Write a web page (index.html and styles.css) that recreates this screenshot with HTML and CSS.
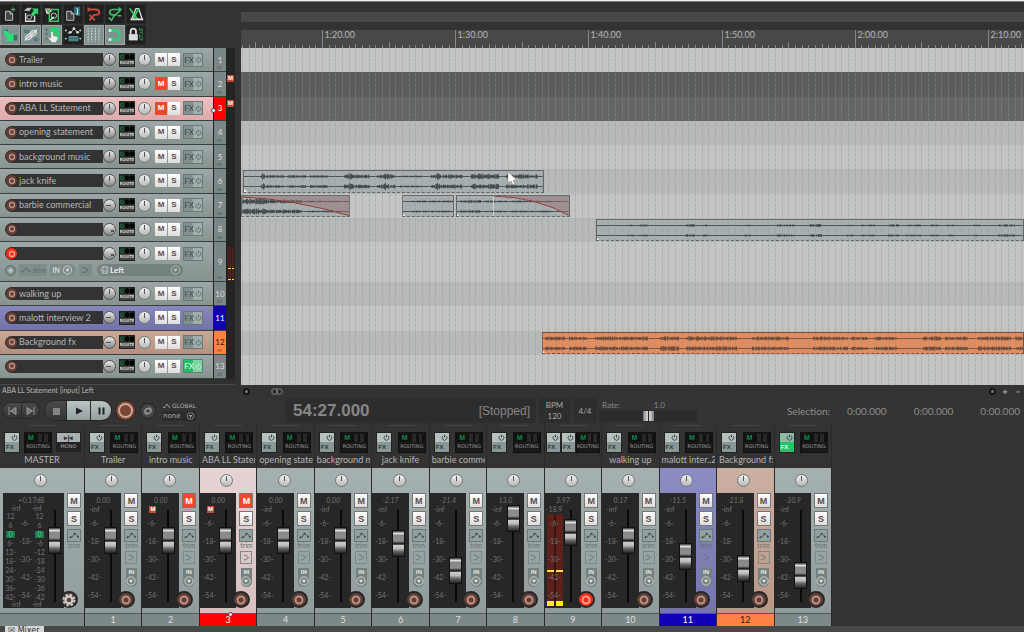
FILE: index.html
```html
<!DOCTYPE html>
<html lang="en">
<head>
<meta charset="utf-8">
<title>Mixer session</title>
<link rel="stylesheet" href="styles.css">
</head>
<body>
<svg class="defs" aria-hidden="true">
  <symbol id="i-new" viewBox="0 0 20 20"><path d="M5 7h5l3 3v7H5z" fill="#444" stroke="#ccc"/><path d="M10 7v3h3" fill="none" stroke="#ccc"/><path d="M13.500 2.500v5M11 5h5M12 3.500l3 3M15 3.500l-3 3" stroke="#4c9f68"/></symbol>
  <symbol id="i-open" viewBox="0 0 20 20"><path d="M4 9v9h10v-6" fill="none" stroke="#ddd" stroke-width="1.500"/><circle cx="8" cy="13.500" r="2.500" fill="none" stroke="#ddd"/><path d="M2 6l4-3 5 0-3 4z" fill="#bbb"/><path d="M10 10l3-4-2-2h7v7l-2-2-4 4z" fill="#39d16d"/></symbol>
  <symbol id="i-save" viewBox="0 0 20 20"><path d="M2 4h6l2 3-3 3H4z" fill="#ccc"/><path d="M4 5l5 4" stroke="#333"/><path d="M7 9V5h10v13H7z" fill="none" stroke="#39c969" stroke-width="1.500"/><circle cx="12" cy="12" r="3" fill="none" stroke="#ddd"/><path d="M8 17l4-4" stroke="#ddd" stroke-width="1.500"/></symbol>
  <symbol id="i-info" viewBox="0 0 20 20"><path d="M3 7h5l3 3v7H3z" fill="#444" stroke="#ccc"/><path d="M8 7v3h3" fill="none" stroke="#ccc"/><path d="M11 2h7v10h-4l-3-3z" fill="#327078"/><path d="M14 4h1v6M13 10h3" fill="none" stroke="#cfe" stroke-width="1"/></symbol>
  <symbol id="i-undo" viewBox="0 0 20 20"><path d="M3 5h9q4 0 4 3t-4 3h-2l-5 6M5 11l6 6" fill="none" stroke="#c94b3b" stroke-width="2"/><path d="M3 2v6l3-3z" fill="#c94b3b"/></symbol>
  <symbol id="i-redo" viewBox="0 0 20 20"><path d="M16 5H8Q4 5 4 8t4 3h4M16 6L9 12l-3 5-3-3M13 12h4" fill="none" stroke="#42b86d" stroke-width="1.800"/><path d="M14 2v6l4-3z" fill="#42b86d"/></symbol>
  <symbol id="i-metro" viewBox="0 0 20 20"><path d="M10 4h3l4 12H5z" fill="none" stroke="#ddd" stroke-width="1.500"/><path d="M3 4l9 12M7 15l6-11" stroke="#35d36d" stroke-width="1.800"/><path d="M4 16h14" stroke="#ddd" stroke-width="2"/></symbol>
  <symbol id="i-cross" viewBox="0 0 20 20"><path d="M3 4h5v5H3zM12 10h6v6h-6z" fill="#456b68"/><path d="M3 5l3 0 5 5 3-3v10H5l3-3-4-4z" fill="#22e477"/></symbol>
  <symbol id="i-link" viewBox="0 0 20 20"><path d="M2 4h6v4H2zM13 3h5v4h-5zM3 13h5v4H3zM13 13h5v4h-5z" fill="#56777a"/><path d="M3 16L17 4" stroke="#eee" stroke-width="1.500"/><ellipse cx="7.500" cy="12" rx="4" ry="2.500" transform="rotate(-42 7.500 12)" fill="none" stroke="#ddd" stroke-width="1.500"/><ellipse cx="12.500" cy="8" rx="4" ry="2.500" transform="rotate(-42 12.500 8)" fill="none" stroke="#ddd" stroke-width="1.500"/></symbol>
  <symbol id="i-hand" viewBox="0 0 20 20"><path d="M3 3h2v2H3zM3 8h2v2H3zM3 13h2v2H3z" fill="#456b68"/><path d="M8 2h10v4H8zM13 7h5v3h-5zM13 11h5v4h-5zM8 7h4v2H8z" fill="#22d873"/><path d="M9 7q1-1 2 0v4l5 1v3l-2 3h-4l-4-5q1-1 3 1z" fill="#eee"/></symbol>
  <symbol id="i-env" viewBox="0 0 20 20"><path d="M4 8l4-1 3-4 4 4 2 0" fill="none" stroke="#ccc"/><g fill="#ddd"><circle cx="2" cy="5" r="1"/><circle cx="7" cy="7" r="1.500"/><circle cx="11" cy="3" r="1.500"/><circle cx="15" cy="7" r="1.500"/><circle cx="18" cy="5" r="1"/><circle cx="2" cy="14" r="1"/><circle cx="18" cy="14" r="1"/></g><rect x="5" y="11" width="11" height="6" rx="1" fill="#4d8588"/><path d="M7 14h7" stroke="#234" stroke-dasharray="1 1"/></symbol>
  <symbol id="i-grid" viewBox="0 0 20 20"><path d="M3.500 2v16M7.500 2v16M11.500 2v16M15.500 2v16" stroke="#dfe5e4" stroke-dasharray="2 1"/></symbol>
  <symbol id="i-magnet" viewBox="0 0 20 20"><path d="M4 5h6a5 5 0 0 1 0 10H4" fill="none" stroke="#2bcf72" stroke-width="3"/><path d="M3 5h3M3 15h3" stroke="#dff" stroke-width="3"/></symbol>
  <symbol id="i-lock" viewBox="0 0 20 20"><path d="M4 9V6q0-3 3-3t3 3v3" fill="none" stroke="#ddd" stroke-width="2"/><path d="M2 9h10v7H2z" fill="#ddd"/><path d="M14 2v3l3-2v4h-3M14 10l3 2v4l-3-2zM17 8v2" fill="none" stroke="#35965a"/></symbol>
  <symbol id="i-power" viewBox="0 0 10 10"><path d="M3 2.500a3.500 3.500 0 1 0 4 0M5 1v4" fill="none" stroke="currentColor" stroke-width="1.200"/></symbol>
  <symbol id="i-ring" viewBox="0 0 10 10"><circle cx="5" cy="5" r="2.500" fill="none" stroke="currentColor" stroke-width="1.400"/></symbol>
  <symbol id="i-trim" viewBox="0 0 14 10"><path d="M2 7.500l3-1 3-4 4 4" fill="none" stroke="currentColor"/><g fill="currentColor"><circle cx="3" cy="7" r="1.200"/><circle cx="7.500" cy="3" r="1.200"/><circle cx="11.500" cy="6.500" r="1.200"/></g></symbol>
  <symbol id="i-chev" viewBox="0 0 10 10"><path d="M2 2.500h2l3.500 2.500-3.500 2.500H2" fill="none" stroke="currentColor"/></symbol>
  <symbol id="i-drop" viewBox="0 0 12 12"><circle cx="6" cy="6" r="5" fill="none" stroke="currentColor"/><path d="M3.500 4.500h5L6 8.500z" fill="currentColor"/></symbol>
  <symbol id="i-plug" viewBox="0 0 12 12"><path d="M3 2h7v8H3zM0 6h3M5 2v3M8 2v3M3 7h7M5 7v3M8 7v3" fill="none" stroke="currentColor"/></symbol>
  <symbol id="i-gear" viewBox="0 0 12 12"><circle cx="6" cy="6" r="3" fill="none" stroke="#ccc" stroke-width="2"/><circle cx="6" cy="6" r="4.700" fill="none" stroke="#ccc" stroke-width="1.600" stroke-dasharray="2 1.700"/></symbol>
</svg>

<main class="workspace">
  <section class="tcp" aria-label="Tracks">
    <div class="toolbar">
      <button class="tool" aria-label="New"><svg><use href="#i-new"/></svg></button>
      <button class="tool" aria-label="Open"><svg><use href="#i-open"/></svg></button>
      <button class="tool" aria-label="Save"><svg><use href="#i-save"/></svg></button>
      <button class="tool" aria-label="Project settings"><svg><use href="#i-info"/></svg></button>
      <button class="tool" aria-label="Undo"><svg><use href="#i-undo"/></svg></button>
      <button class="tool" aria-label="Redo"><svg><use href="#i-redo"/></svg></button>
      <button class="tool" aria-label="Metronome"><svg><use href="#i-metro"/></svg></button>
      <button class="tool on" aria-label="Crossfade"><svg><use href="#i-cross"/></svg></button>
      <button class="tool on" aria-label="Item grouping"><svg><use href="#i-link"/></svg></button>
      <button class="tool on" aria-label="Ripple edit"><svg><use href="#i-hand"/></svg></button>
      <button class="tool" aria-label="Move envelopes"><svg><use href="#i-env"/></svg></button>
      <button class="tool on" aria-label="Grid"><svg><use href="#i-grid"/></svg></button>
      <button class="tool on" aria-label="Snap"><svg><use href="#i-magnet"/></svg></button>
      <button class="tool" aria-label="Lock"><svg><use href="#i-lock"/></svg></button>
    </div>
    <div class="rows" id="tracks"></div>
    <div class="tcp-end"></div>
  </section>
  <section class="arrange" aria-label="Arrangement">
    <div class="regions"></div>
    <div class="ruler"><svg id="ruler"></svg></div>
    <div class="timeline">
      <div class="rows" id="lanes"></div>
      <div class="lane-end"></div>
      <svg class="gridlines" id="gridlines"></svg>
      <svg class="cursor" viewBox="0 0 10 14"><path d="M1 0v11l3-2 2 4 2-1-2-4h4z" fill="#fff" stroke="#777" stroke-width=".5"/></svg>
    </div>
  </section>
</main>

<div class="status">
  <span class="status-text">ABA LL Statement [input] Left</span>
  <div class="hscroll">
    <button class="dot" aria-label="Scroll left"></button><button class="grip" aria-label="Scroll handle"></button>
    <span class="fill"></span>
    <button class="dot" aria-label="Scroll right"></button><button class="zoom" aria-label="Zoom in">✚</button><button class="zoom" aria-label="Zoom out">━</button>
  </div>
</div>

<section class="transport" aria-label="Transport">
  <div class="pill">
    <button aria-label="Go to start"><svg viewBox="0 0 10 10"><path d="M2 1v8M9 1.500v7L3.500 5z" stroke="#999" fill="#777"/></svg></button>
    <button aria-label="Go to end"><svg viewBox="0 0 10 10"><path d="M8 1v8M1 1.500v7L6.500 5z" stroke="#999" fill="#777"/></svg></button>
  </div>
  <div class="pill main">
    <button aria-label="Stop"><svg viewBox="0 0 10 10"><path d="M2 2h7v7H2z" fill="#858585"/></svg></button>
    <button class="lit" aria-label="Play"><svg viewBox="0 0 10 10"><path d="M2 1.500v7L9 5z" fill="#222"/></svg></button>
    <button class="lit" aria-label="Pause"><svg viewBox="0 0 10 10"><path d="M3.500 1.500v7M7.500 1.500v7" stroke="#222" stroke-width="2"/></svg></button>
  </div>
  <button class="record" aria-label="Record"></button>
  <button class="repeat" aria-label="Repeat"><svg viewBox="0 0 10 10"><path d="M2 7.500V4.500l2-2h2M8 2.500v3l-2 2H4" fill="none" stroke="#999" stroke-width="1.500"/><path d="M6 .5v4l2-2zM4 9.500v-4l-2 2z" fill="#999"/></svg></button>
  <div class="global">
    <span><svg viewBox="0 0 14 10"><use href="#i-trim"/></svg>GLOBAL</span>
    <span class="none">none<svg viewBox="0 0 12 12"><use href="#i-drop"/></svg></span>
  </div>
  <div class="clock"><span>54:27.000</span><span class="state">[Stopped]</span></div>
  <div class="bpm"><span>BPM</span><span>120</span></div>
  <div class="sig">4/4</div>
  <div class="rate">
    <div class="rate-head"><label for="rate">Rate:</label><span>1.0</span></div>
    <input id="rate" type="range" min="0" max="100" value="51">
  </div>
  <div class="selection"><span>Selection:</span><span>0:00.000</span><span>0:00.000</span><span>0:00.000</span></div>
</section>

<section class="mixer" id="mixer" aria-label="Mixer"></section>
<footer class="dock"><span class="tab">☒ Mixer</span></footer>
<script src="app.js"></script>
</body>
</html>
```

FILE: styles.css
```css
* { box-sizing: border-box; }
body {
  margin: 0;
  min-height: 100vh;
  display: flex;
  flex-direction: column;
  background: #333;
  border-top: 1px solid #eef2f0;
  color: #aaa;
  font: 9px/12px Lato, "Open Sans", sans-serif;
  overflow: hidden;
}
button, input, select { font: inherit; color: inherit; border: 0; padding: 0; margin: 0; background: none; border-radius: 0; }
button { display: flex; align-items: center; justify-content: center; }
.defs { position: absolute; width: 0; height: 0; }

.workspace { flex: 1; display: flex; gap: 6px; border-top: 1px solid #777; }
.tcp { width: 235px; display: flex; flex-direction: column; }
.toolbar { height: 46px; padding-top: 2px; display: grid; grid-template-columns: repeat(7, 20px); gap: 1px; align-content: start; }
.tool { height: 20px; background: #202020; border: 1px solid #292929; }
.tool.on { background: #819190; border-color: #9aa7a5; }
.tool svg { width: 18px; height: 18px; flex: none; }
.rows { flex: 1; display: grid; grid-template-rows: repeat(8, 1fr) 40px repeat(4, 1fr); }
.tcp-end { height: 6px; border-bottom: 1px solid #4a4a4a; background: #303030; }

.track { display: grid; grid-template-columns: 1fr 12px 8px; column-gap: 1px; background: #222; }
.panel { background: linear-gradient(#9ca8a7, #87938f); border-bottom: 1px solid #39403f; padding: 4px 0 0 5px; }
.line { display: flex; align-items: center; height: 15px; }
.num { position: relative; display: flex; align-items: center; justify-content: center; background: #7b8786; border-bottom: 1px solid #39403f; color: #ddd; font-size: 8px; }
.num::after { content: ""; position: absolute; right: 4px; bottom: 2px; width: 5px; height: 3px; background: #6b7675; }
.track.red .panel { background: linear-gradient(#eec0c1, #dda9ab); }
.track.blue .panel { background: linear-gradient(#8789bd, #7072a9); }
.track.orange .panel { background: linear-gradient(#cba896, #b59080); }
.red .num { background: #ff0000; color: #fff; }
.red .num::after { left: -3px; top: 11px; width: 3px; height: 3px; border: 1px solid #444; border-radius: 50%; background: #eee; }
.blue .num { background: #1200b4; color: #fff; }
.blue .num::after { display: none; }
.orange .num { background: #ff8143; color: #222; }
.orange .num::after { background: #d56b39; }
.meter { position: relative; background: #242424; padding-top: 5px; }
.meter .bars { height: 34px; margin: 0 1px; background: linear-gradient(90deg, transparent 45%, #242424 45% 60%, transparent 60%), linear-gradient(#f1e53b, #f1e53b) 0 21px / 100% 1px no-repeat, linear-gradient(#f1e53b, #f1e53b) 0 32px / 100% 1px no-repeat, #4c211d; }
.badge { display: block; width: 7px; height: 7px; background: #c2483c; color: #fff; font: bold 6px/7px "Liberation Sans", sans-serif; text-align: center; }
.track .badge { margin-top: -2px; }

.rec { flex: none; width: 13px; height: 13px; border-radius: 50%; background: #5e4038; border: 1px solid #2f2522; color: #c08f80; z-index: 1; }
.rec svg { width: 10px; height: 10px; flex: none; }
.rec.armed { background: #fb2c1c; color: #ff9b88; }
.name { width: 91px; height: 13px; background: #333; color: #b6b6b6; margin-left: -6px; padding: 0 0 1px 7px; }
.knob { display: block; flex: none; width: 13px; height: 13px; border-radius: 50%; border: 1px solid #707876; background: linear-gradient(#555, #555) 50% 1px / 1px 5px no-repeat, linear-gradient(#f0f0f0, #b8b8b8); }
.knob.vol { border-color: #555; background: linear-gradient(#555, #555) 50% 1px / 1px 5px no-repeat, linear-gradient(#e8e8e8, #858585); }
.knob.vol.q { background: linear-gradient(#555, #555) 2px 5px / 5px 1px no-repeat, linear-gradient(#e8e8e8, #858585); }
.knob.vol.t { background: linear-gradient(#555, #555) 7px 6px / 3px 2px no-repeat, linear-gradient(#e8e8e8, #858585); }
.route { width: 16px; height: 14px; margin: 0 3px; background: #444; border: 1px solid #222; display: flex; flex-direction: column; justify-content: flex-start; color: #ccc; font: bold 4px/6px "DejaVu Sans", sans-serif; overflow: hidden; }
.route::before { content: ""; height: 6px; width: 100%; background: radial-gradient(circle at 2px 3px, #163326 1px, #33875c 2px, transparent 2px), radial-gradient(circle at 7px 3px, #000 2px, transparent 3px), radial-gradient(circle at 12px 3px, #000 2px, transparent 3px), #1c3328; }
.ms { display: flex; gap: 1px; margin-left: 4px; }
.mbtn { width: 12px; height: 13px; background: linear-gradient(#fff, #dcdcdc); color: #5a4a4a; font: bold 8px/12px "Liberation Sans", sans-serif; }
.mbtn.muted { background: #f0462c; color: #fff; }
.fx { width: 20px; height: 14px; margin-left: 3px; border: 1px solid #6c7877; color: #3d4a49; background: linear-gradient(90deg, #82908f 50%, #a0aeac 50%); font-size: 8px; gap: 1px; }
.fx svg { width: 7px; height: 7px; opacity: .7; }
.fx.active { background: linear-gradient(90deg, #24bd66 50%, #7ad3a1 50%); color: #e8fff0; }
.extra { display: flex; align-items: center; height: 14px; margin-top: 2px; gap: 3px; color: #5c6867; font-size: 7px; }
.extra .mini { width: 11px; height: 11px; border: 1px solid #5c6867; border-radius: 50%; background: radial-gradient(#b5bfbd 30%, #84908f 40%); }
.extra button { height: 12px; background: #808c8b; gap: 2px; padding: 0 1px; }
.extra svg { width: 11px; height: 10px; }
.extra .in { color: #d4dbda; font-weight: bold; padding: 0 3px; border-radius: 0 6px 6px 0; }
.source { display: flex; align-items: center; width: 86px; height: 12px; padding: 0 2px; margin-left: 2px; background: #75817f; border-radius: 6px; color: #bac3c2; }
.source select { appearance: none; flex: 1; color: #eee; font: bold 8px/10px Lato, sans-serif; }

.arrange { flex: 1; min-width: 0; display: flex; flex-direction: column; }
.regions { height: 10px; margin: 10px 0 8px; background: #484848; }
.ruler { height: 18px; background: #484848; }
.ruler svg { display: block; width: 100%; height: 18px; overflow: hidden; }
.ruler text { fill: #b5b5b5; font: 9px Lato, sans-serif; }
.timeline { flex: 1; position: relative; display: flex; flex-direction: column; }
.lane { position: relative; background: #c3c5c4; }
.lane:nth-child(even) { background: #b7b9b8; }
.lane.mute { background: #646665; }
.lane.mute:nth-child(even) { background: #5b5d5c; }
.lane-end { height: 6px; background: #c3c5c4; }
.gridlines { position: absolute; inset: 0; width: 100%; height: 100%; pointer-events: none; }
.clip { position: absolute; top: 1px; bottom: 1px; background: #a7afb0; border: 1px solid #626868; overflow: hidden; border-bottom-style: dashed; }
.clip svg { position: absolute; left: 0; top: 0; width: 100%; height: 100%; }
.clip.warm { background: #e18d62; border-color: #76503d; }
.wave { fill: none; stroke: #3d4444; stroke-opacity: .85; }
.warm .wave { stroke: #6b4836; }
.cursor { position: absolute; left: 266px; top: 124px; width: 10px; height: 14px; }

.status { display: flex; height: 13px; }
.status-text { width: 241px; padding-left: 2px; font: 7px/11px Lato, sans-serif; color: #b5b5b5; }
.hscroll { flex: 1; display: flex; align-items: center; gap: 5px; padding: 0 2px; }
.hscroll .fill { flex: 1; }
.dot { width: 7px; height: 7px; border-radius: 50%; background: #161616; border: 2px solid #161616; }
.dot::after { content: ""; width: 3px; height: 3px; background: #777; border-radius: 50%; flex: none; }
.grip { width: 12px; height: 7px; border-radius: 4px; border: 2px solid #5a5a5a; background: linear-gradient(90deg, #222 35%, #777 35% 65%, #222 65%); margin-left: 16px; }
.zoom { width: 8px; height: 8px; font: 6px/8px "DejaVu Sans", sans-serif; color: #999; }

.transport { display: flex; align-items: center; height: 25px; padding-left: 2px; background: #343434; }
.pill { display: flex; height: 17px; border: 1px solid #262626; border-radius: 9px; overflow: hidden; background: linear-gradient(#4a4a4a, #343434); }
.pill button { width: 18px; }
.pill svg { width: 10px; height: 10px; }
.pill button + button { border-left: 1px solid #2a2a2a; }
.pill.main { height: 21px; border-radius: 11px; margin-left: 4px; }
.pill.main button { width: 21px; }
.pill.main .lit { background: linear-gradient(#b9c4c3, #93a09f); width: 24px; }
.pill.main .lit:last-child { width: 21px; }
.record { width: 21px; height: 21px; border-radius: 50%; background: #7c4433; border: 1px solid #2a1f1c; margin-left: 3px; }
.record::after { content: ""; width: 11px; height: 11px; border: 2px solid #c9aba0; border-radius: 50%; flex: none; }
.repeat { width: 16px; height: 16px; border-radius: 50%; background: #454545; border: 1px solid #222; margin: 0 6px 0 4px; }
.repeat svg { width: 10px; height: 10px; flex: none; }
.global { width: 34px; font: 6px/10px "DejaVu Sans", sans-serif; white-space: nowrap; }
.global span { display: flex; align-items: center; gap: 1px; }
.global svg { width: 9px; height: 8px; }
.global .none { font-size: 7px; background: #2c2c2c; justify-content: space-between; padding: 0 1px; }
.clock { width: 250px; height: 25px; margin-left: 90px; padding: 0 6px 0 7px; display: flex; align-items: center; justify-content: space-between; background: #2d2d2d; color: #868686; font: bold 17px/24px "Liberation Sans", sans-serif; }
.state { font-size: 12px; font-weight: normal; }
.bpm, .sig { height: 25px; background: #2e2e2e; display: flex; flex-direction: column; justify-content: space-evenly; align-items: center; margin-left: 3px; font-size: 8px; }
.bpm { width: 31px; line-height: 10px; }
.sig { width: 24px; }
.rate { width: 98px; margin-left: 2px; font-size: 8px; color: #888; }
.rate-head { display: flex; justify-content: space-between; padding: 0 32px 0 3px; line-height: 10px; }
#rate { display: block; appearance: none; width: 100%; height: 12px; background: #2c2c2c; }
#rate::-webkit-slider-thumb { appearance: none; width: 11px; height: 10px; background: linear-gradient(90deg, #777, #ddd 40%, #222 50%, #ddd 60%, #777); }
.selection { flex: 1; display: flex; justify-content: flex-end; gap: 27px; padding-right: 4px; color: #8d8d8d; font: 10px/14px Lato, sans-serif; }
.selection span:first-child { margin-right: -10px; }

.mixer { display: grid; grid-template-columns: 84px repeat(13, 1fr); width: 81.25%; border-right: 1px solid #292929; }
.strip { min-width: 0; display: flex; flex-direction: column; border-left: 1px solid #2a2a2a; }
.strip.master { border-left: 0; }
.strip-top { height: 45px; padding: 7px 1px 0; border-top: 2px solid #333; background: linear-gradient(#444, #444) 50% 0 / 28px 1px no-repeat; }
.chips { display: flex; justify-content: space-between; height: 21px; padding: 0 2px 0 3px; }
.fxchip { width: 16px; height: 21px; background: linear-gradient(#b4c1bf 45%, #899796 45%); border: 1px solid #222; color: #2c3837; flex-direction: column; font: bold 6px/8px "Liberation Sans", sans-serif; align-items: flex-start; padding-left: 1px; }
.fxchip svg { width: 7px; height: 7px; align-self: flex-end; margin: 0 1px 2px; }
.fxchip.active { background: linear-gradient(#8eb9a2 45%, #1fc566 45%); }
.fxchip.active span { color: #e6ffe9; }
.routing { width: 28px; height: 21px; background: #191919; border: 1px solid #111; color: #999; flex-direction: column; font: 5px/9px "DejaVu Sans", sans-serif; overflow: hidden; }
.routing b { width: 100%; height: 8px; padding-left: 3px; text-align: left; font: bold 7px/8px "Liberation Sans", sans-serif; color: #10864a; background: linear-gradient(90deg, transparent 50%, #282828 50% 65%, transparent 65% 75%, #282828 75% 90%, transparent 90%), #111; }
.mono { width: 25px; height: 20px; background: linear-gradient(#a9b2b1 50%, #222 50%); border: 1px solid #222; flex-direction: column; font: 5px/9px "DejaVu Sans", sans-serif; justify-content: space-between; }
.mono b { color: #333; font: bold 7px/9px "Liberation Sans", sans-serif; }
.has-in .chips { padding: 0; }
.has-in .chips .routing { width: 25px; }
.label { height: 14px; text-align: center; white-space: nowrap; overflow: hidden; line-height: 14px; color: #b5b5b5; }
.long .label { text-align: left; padding-left: 1px; }
.body { background: linear-gradient(#a5b1b0, #8f9c9b); height: 145px; padding: 6px 3px 0 0; }
.body > .knob { margin: 0 auto 6px; }
.core { display: flex; height: 115px; }
.deck { position: relative; flex: 1; min-width: 0; display: flex; justify-content: space-between; background: #272727; padding: 3px 4px 0 1px; font: 7px/18px Lato, sans-serif; color: #737373; }
.value { position: absolute; left: 0; right: 0; top: 3px; text-align: center; font-style: italic; line-height: 9px; }
.scale { display: flex; flex-direction: column; padding-top: 9px; width: 17px; text-align: center; }
.scale :first-child { line-height: 9px; }
.scale .badge { line-height: 7px; margin: 1px 0 1px 6px; }
.fader { appearance: none; writing-mode: vertical-lr; direction: rtl; width: 13px; height: 99px; margin-top: 9px; background: linear-gradient(#0a0a0a, #0a0a0a) 50% 5px / 2px 92px no-repeat; position: relative; }
.fader::-webkit-slider-thumb { appearance: none; width: 13px; height: 27px; border: 1px solid #111; background: linear-gradient(#333, #ddd 10%, #888 18%, #8d8d8d 40%, #444 47%, #111 52%, #ccc 58%, #bbb 70%, #666 82%, #222); }
.side { flex: none; width: 17px; display: flex; flex-direction: column; align-items: center; padding-left: 3px; color: #66716f; font: 7px/7px Lato, sans-serif; }
.side .mbtn { width: 14px; height: 15px; font-size: 9px; border: 1px solid #777; flex: none; }
.side .mbtn + .mbtn { margin: 3px 0; }
.side .trim { width: 14px; height: 13px; border: 1px solid #6c7877; background: #92a09f; color: #3f4d4c; }
.side .trim svg { width: 12px; height: 9px; flex: none; }
.side .send { width: 12px; height: 13px; margin-top: 2px; border: 1px solid #7d8988; }
.side .send svg { width: 9px; height: 9px; }
.side .in { flex-direction: column; width: 11px; height: 19px; margin-top: 4px; border-radius: 0 0 6px 6px; background: #75817f; color: #e2e7e6; font: bold 6px/7px "Liberation Sans", sans-serif; }
.side .in svg { width: 10px; height: 10px; flex: none; }
.side .rec { margin: auto 0 0 -10px; width: 18px; height: 17px; border: 2px solid #272727; border-radius: 50%; }
.side .rec svg { width: 14px; height: 14px; }
.foot { position: relative; height: 13px; background: #7d8988; border-top: 1px solid #4e5958; color: #ddd; text-align: center; line-height: 12px; }
.strip.red .body { background: linear-gradient(#e6d3d3, #d7bfbf); }
.strip.blue .body { background: linear-gradient(#8d8dc5, #7475af); }
.strip.orange .body { background: linear-gradient(#cbb0a1, #ba9787); }
.red .foot { background: #ff0000; color: #fff; }
.red .foot::before { content: ""; position: absolute; left: 50%; top: -2px; width: 3px; height: 3px; border: 1px solid #444; border-radius: 50%; background: #eee; }
.blue .foot { background: #1200b4; color: #fff; }
.orange .foot { background: #ff8143; color: #222; }
.peak { position: absolute; left: 2px; top: 21px; width: 16px; bottom: 2px; background: linear-gradient(90deg, transparent 7px, #351612 7px 9px, transparent 9px), linear-gradient(#f1e53b, #f1e53b) 0 56px / 100% 2px no-repeat, linear-gradient(#fff200, #fff200) 0 87px / 100% 5px no-repeat, #5c211b; }
.peak ~ .scale { position: relative; }
.master .deck { margin-left: 3px; padding: 3px 3px 0 1px; }
.master .side { padding-left: 3px; }
.master .scale.db { width: 13px; line-height: 9px; padding-top: 16px; }
.master .scale.mid { width: 12px; }
.master .scale.mid :first-child { visibility: hidden; }
.db .zero { background: #1b7c4b; color: #5fd596; height: 7px; margin: 1px 2px; line-height: 7px; }
.infs { position: absolute; left: 7px; width: 32px; display: flex; justify-content: space-between; line-height: 7px; }
.infs.top { top: 12px; }
.infs.low { bottom: 0; }
.master .value { right: 4px; font-style: normal; }

.dock { height: 6px; background: #484848; overflow: hidden; }
.tab { display: block; width: 39px; height: 12px; margin-left: 5px; padding-left: 3px; background: #d5d8d7; color: #333; font: 8px/10px "DejaVu Sans", sans-serif; white-space: nowrap; }
```

FILE: app.js
```js
const tracks = [
  { name: 'Trailer', gain: '0.00', fader: 50 },
  { name: 'intro music', gain: '0.00', fader: 50, mute: true },
  { name: 'ABA LL Statement', short: 'ABA LL Statem', gain: '0.00', fader: 50, mute: true, color: 'red', long: true },
  { name: 'opening statement', short: 'opening state', gain: '0.00', fader: 50, long: true },
  { name: 'background music', short: 'background m', gain: '0.00', fader: 50, long: true },
  { name: 'jack knife', gain: '-2.17', fader: 47 },
  { name: 'barbie commercial', short: 'barbie comme', gain: '-21.4', fader: 20, long: true, turn: 'q' },
  { name: '', gain: '13.0', fader: 72, turn: 't' },
  { name: '', gain: '3.97', fader: 58, armed: true, turn: 't' },
  { name: 'walking up', gain: '0.17', fader: 50 },
  { name: 'malott interview 2', short: 'malott inter..2', gain: '-11.5', fader: 34, color: 'blue', turn: 'q', long: true },
  { name: 'Background fx', gain: '-21.8', fader: 22, color: 'orange', turn: 'q', long: true },
  { name: '', gain: '-30.9', fader: 15, fx: true, turn: 'q' }
];
const icon = id => `<svg><use href="#i-${id}"/></svg>`;

/* Bursts are [start, end, amplitude, optional peak position], in timeline pixels. */
const clips = {
  5: [{ x: 2, w: 301, bursts: [[17, 21, 4], [22, 40, 1.5], [43, 62, 1.5], [66, 84, 1.5], [100, 126, 2, 105], [133, 152, 2, 141], [155, 178, 1], [187, 219, 2, 193], [227, 255, 2.8], [262, 294, 2.300]] }],
  6: [
    { x: 0, w: 109, bursts: [[0, 25, 3], [25, 60, 2], [66, 98, 1]], fade: 'M0 1Q50 3 109 20V0H0Z', line: 'M0 1Q50 3 109 20' },
    { x: 161, w: 52, bursts: [[8, 50, 1]] },
    { x: 215, w: 114, bursts: [[3, 24, 1.5], [27, 50, 1], [54, 95, 1]], fade: 'M36 0Q80 1 113 20V0Z', line: 'M36 0Q80 1 113 20', split: 36 }
  ],
  7: [{ x: 355, w: 1400, bursts: [[30, 37, 1], [42, 52, 1], [89, 98, 1.5], [105, 111, 1], [147, 154, 1], [180, 198, 1.2], [212, 225, 1.5], [250, 257, 1], [264, 278, 1], [291, 302, 1.3], [309, 324, 1], [333, 342, 1], [350, 358, 1], [377, 383, 1], [401, 418, 1.300]] }],
  11: [{ x: 301, w: 1400, warm: true, bursts: [[2, 22, 2], [26, 44, 2], [52, 75, 2.2], [76, 105, 2], [117, 136, 2.5], [143, 194, 2.3], [209, 246, 2], [270, 305, 2], [308, 325, 2], [331, 354, 2], [380, 398, 2.2], [402, 425, 2], [435, 468, 2.3], [472, 500, 2]] }]
};

let seed = 7;
const noise = () => (seed = (seed * 16807) % 2147483647) / 2147483647;

function wave(bursts, width) {
  return [5.5, 15.5].map(y => {
    let d = `M0 ${y}H${width}`;
    for (const [from, to, amp, peak] of bursts) {
      for (let x = from; x < to; x++) {
        const boost = peak ? 1 + Math.max(0, 1 - Math.abs(x - peak) / 4) : 1;
        const h = amp * boost * (0.4 + 0.6 * noise());
        d += `M${x}.5 ${(y - h).toFixed(1)}V${(y + h).toFixed(1)}`;
      }
    }
    return `<path class="wave" d="${d}"/>`;
  }).join('');
}

function clipHtml(c) {
  const fade = c.fade ? `<path d="${c.fade}" fill="#9a7072" opacity=".5"/><path d="${c.line}" fill="none" stroke="#923b35"/>` : '';
  const split = c.split ? `<path d="M${c.split}.5 0V22" stroke="#ddd" stroke-opacity=".7"/>` : '';
  return `<div class="clip ${c.warm ? 'warm' : ''}" style="left:${c.x}px;${c.w > 600 ? 'right:0' : `width:${c.w}px`}"><svg>${wave(c.bursts, c.w)}${fade}${split}<path d="M0 18v4h4z" fill="#fff"/></svg></div>`;
}

const extra = `<div class="extra"><span class="mini"></span><button aria-label="Trim">${icon('trim')}trim</button><button class="in">IN ${icon('drop')}</button><button aria-label="Phase">${icon('chev')}</button><div class="source">${icon('plug')}<select aria-label="Input source"><option>Left</option></select>${icon('drop')}</div></div>`;

document.getElementById('tracks').innerHTML = tracks.map((t, i) => `
  <div class="track ${t.color || ''}">
    <div class="panel"><div class="line">
      <button class="rec ${t.armed ? 'armed' : ''}" aria-label="Arm track ${i + 1}">${icon('ring')}</button>
      <input class="name" aria-label="Track ${i + 1} name" value="${t.name}">
      <span class="knob vol ${t.turn || ''}"></span>
      <button class="route">ROUTE</button>
      <span class="knob"></span>
      <div class="ms"><button class="mbtn ${t.mute ? 'muted' : ''}">M</button><button class="mbtn">S</button></div>
      <button class="fx ${t.fx ? 'active' : ''}">FX${icon('power')}</button>
    </div>${t.armed ? extra : ''}</div>
    <div class="num">${i + 1}</div>
    <div class="meter">${t.mute ? '<span class="badge">M</span>' : ''}${t.armed ? '<div class="bars"></div>' : ''}</div>
  </div>`).join('');

document.getElementById('lanes').innerHTML = tracks.map((t, i) =>
  `<div class="lane ${t.mute ? 'mute' : ''}">${(clips[i] || []).map(clipHtml).join('')}</div>`).join('');

/* Ten seconds span 133.2px, with twenty grid divisions. */
const step = 6.66, origin = 81;
const ruler = document.getElementById('ruler');

function drawRuler() {
  const width = ruler.clientWidth;
  let ticks = '', grid = '', labels = '';
  for (let n = -12; origin + n * step < width; n++) {
    const x = Math.round(origin + n * step) + 0.5;
    const major = n % 20 === 0;
    ticks += `M${x} ${major ? 0 : n % 10 === 0 ? 12 : n % 5 === 0 ? 14 : 15}V18`;
    grid += `M${x} 0V2000`;
    if (major && n >= 0) {
      const s = 80 + n / 2;
      labels += `<text x="${x + 2}" y="8">${Math.floor(s / 60)}:${String(s % 60).padStart(2, '0')}.00</text>`;
    }
  }
  ruler.innerHTML = `<path d="${ticks}" stroke="#888"/>${labels}`;
  document.getElementById('gridlines').innerHTML = `<path d="${grid}" stroke="#8c9390" stroke-opacity=".4" stroke-dasharray="4 1"/>`;
}

const marks = ['-6-', '-18-', '-30-', '-42-', '-54-'].map(v => `<span>${v}</span>`).join('');
const routing = '<button class="routing"><b>M</b>ROUTING</button>';
const fxChip = on => `<button class="fxchip ${on ? 'active' : ''}">${icon('power')}<span>FX</span></button>`;
const buttons = mute => `<button class="mbtn ${mute ? 'muted' : ''}">M</button><button class="mbtn">S</button><button class="trim" aria-label="Envelope">${icon('trim')}</button>trim`;
const db = ['12', '6', '0', '6-', '12-', '18-', '24-', '30-', '36-', '42-'];
const dbScale = side => `<div class="scale db">${db.map(v => v === '0' ? '<span class="zero">0</span>' : `<span>${side && v.endsWith('-') ? '-' + v.slice(0, -1) : v}</span>`).join('')}</div>`;
const infs = pos => `<div class="infs ${pos}"><span>-inf</span><span>-inf</span></div>`;

const master = `<div class="strip master">
  <div class="strip-top"><div class="chips">${fxChip()}${routing}<button class="mono"><b>▸|◂</b>MONO</button></div><div class="label">MASTER</div></div>
  <div class="body"><span class="knob"></span><div class="core">
    <div class="deck"><span class="value">+0.17dB</span>${infs('top')}${dbScale(0)}<div class="scale mid"><span>-</span>${marks}</div>${dbScale(1)}${infs('low')}<input class="fader" type="range" min="0" max="72" value="50" aria-label="Master volume"></div>
    <div class="side">${buttons()}<button class="rec" aria-label="Master settings">${icon('gear')}</button></div>
  </div></div><div class="foot"></div></div>`;

document.getElementById('mixer').innerHTML = master + tracks.map((t, i) => `
  <div class="strip ${t.color || ''} ${t.armed ? 'has-in' : ''} ${t.long ? 'long' : ''}">
    <div class="strip-top"><div class="chips">${fxChip(t.fx)}${t.armed ? fxChip() : ''}${routing}</div><div class="label">${t.short || t.name}</div></div>
    <div class="body"><span class="knob"></span><div class="core">
      <div class="deck"><span class="value">${t.gain}</span>${t.armed ? '<div class="peak"></div>' : ''}
        <div class="scale">${t.mute ? '<span class="badge">M</span>' : `<span>${t.armed ? '-18.9' : '-inf'}</span>`}${marks}</div>
        <input class="fader" type="range" min="0" max="72" value="${t.fader}" aria-label="Volume ${i + 1}"></div>
      <div class="side">${buttons(t.mute)}<button class="send" aria-label="Phase">${icon('chev')}</button><button class="in">IN${icon('drop')}</button><button class="rec ${t.armed ? 'armed' : ''}" aria-label="Record arm ${i + 1}">${icon('ring')}</button></div>
    </div></div>
    <div class="foot">${i + 1}</div>
  </div>`).join('');

drawRuler();
window.addEventListener('resize', drawRuler);
```
